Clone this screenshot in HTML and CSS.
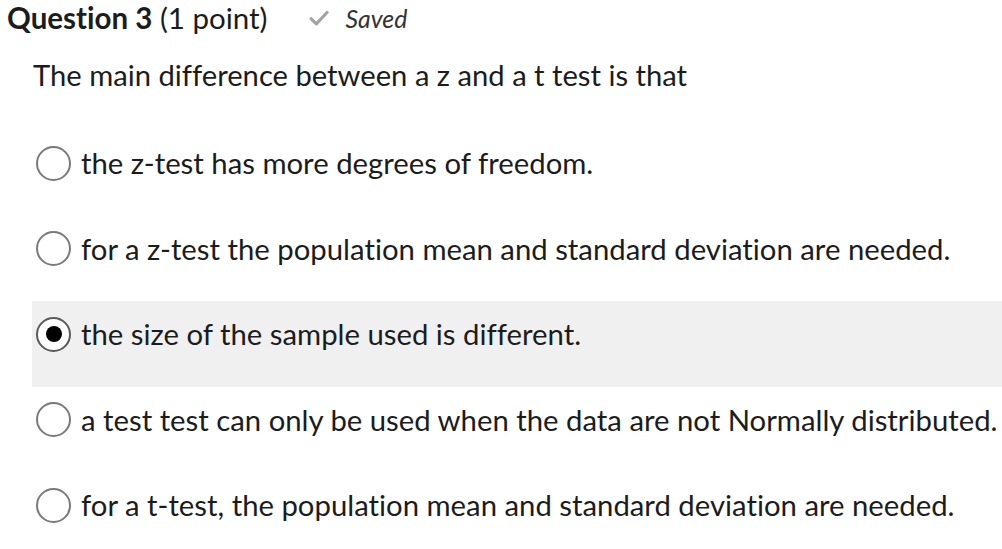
FILE: index.html
```html
<!DOCTYPE html>
<html>
<head>
<meta charset="utf-8">
<link rel="stylesheet" href="styles.css">
</head>
<body>
<div class="header">
  <span class="qtitle"><b>Question 3</b> (1 point)</span>
  <span class="saved">
    <svg class="check" width="20" height="16" viewBox="0 0 20 16"><path d="M2.2 8.8 L7.3 13.8 L18 2.5" fill="none" stroke="#a3a3a3" stroke-width="3.2" stroke-linecap="round" stroke-linejoin="round"/></svg>
    <i>Saved</i>
  </span>
</div>
<div class="question">The main difference between a z and a t test is that</div>
<div class="options">
  <div class="opt"><span class="radio"></span><span class="label">the z-test has more degrees of freedom.</span></div>
  <div class="opt"><span class="radio"></span><span class="label">for a z-test the population mean and standard deviation are needed.</span></div>
  <div class="opt selected"><span class="radio on"></span><span class="label">the size of the sample used is different.</span></div>
  <div class="opt"><span class="radio"></span><span class="label">a test test can only be used when the data are not Normally distributed.</span></div>
  <div class="opt"><span class="radio"></span><span class="label">for a t-test, the population mean and standard deviation are needed.</span></div>
</div>
</body>
</html>
```
FILE: styles.css
```css
html, body { margin: 0; padding: 0; background: #fff; }
body {
  font-family: Lato, "Noto Sans", sans-serif;
  color: #1c1c1c;
  width: 1002px;
  overflow: hidden;
  font-variant-ligatures: none;
}
.header {
  display: flex;
  align-items: center;
  height: 36px;
  padding-left: 7px;
}
.qtitle { font-size: 29.5px; line-height: 36px; }
.qtitle b { font-weight: 700; }
.saved {
  display: flex;
  align-items: center;
  margin-left: 42px;
  color: #333;
  font-size: 24.8px;
}
.check { margin-right: 16px; }
.question {
  margin-top: 17px;
  padding-left: 33px;
  font-size: 29.2px;
  line-height: 44px;
}
.options { margin-top: 33px; margin-left: 32px; }
.opt {
  display: flex;
  align-items: center;
  padding: 11px 0 30.5px 4px;
  font-size: 29.3px;
  line-height: 44px;
}
.opt.selected { background: #f0f0f0; }
.radio {
  box-sizing: border-box;
  width: 35px;
  height: 35px;
  border: 2px solid #7a7a7a;
  border-radius: 50%;
  background: #fff;
  margin-right: 10px;
  flex: none;
  display: flex;
  align-items: center;
  justify-content: center;
}
.radio.on { border-color: #5a5a5a; }
.radio.on::after {
  content: "";
  width: 16px;
  height: 16px;
  border-radius: 50%;
  background: #000;
}
.label { white-space: nowrap; }
```
